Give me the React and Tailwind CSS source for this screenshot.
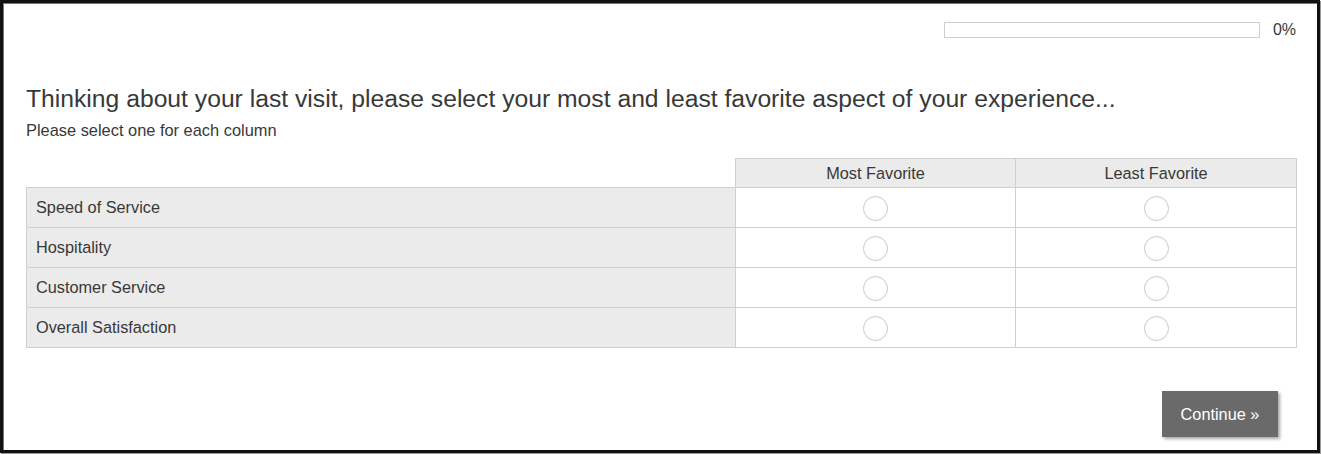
import React from "react";

const rows = ["Speed of Service", "Hospitality", "Customer Service", "Overall Satisfaction"];

function Radio() {
  return <span className="inline-block w-[25px] h-[25px] rounded-full border border-[#c8c8c8] bg-white align-middle" />;
}

export default function App() {
  return (
    <div className="w-[1321px] h-[454px] bg-white font-['Liberation_Sans',Arial,sans-serif] text-[#383838]">
      <div className="w-[1320px] h-[453px] border-[3px] border-[#111] shadow-[1px_1px_0_#999,inset_1px_1px_0_#777] flex flex-col pl-[23px] pr-[20px] pt-[17px]">
        {/* progress */}
        <div className="flex items-center justify-end gap-[13px]">
          <div className="w-[316px] h-[16px] border border-[#cfcfcf] bg-white" />
          <span className="text-[16px] leading-[20px] mr-[1px]">0%</span>
        </div>

        <h1 className="mt-[45px] text-[24.7px] leading-[28px] font-normal">
          Thinking about your last visit, please select your most and least favorite aspect of your experience...
        </h1>
        <p className="mt-[7px] text-[16.4px] leading-[20px]">Please select one for each column</p>

        <table className="mt-[18px] w-[1270px] table-fixed border-collapse text-[16.3px]">
          <colgroup>
            <col className="w-[709px]" />
            <col className="w-[280px]" />
            <col className="w-[281px]" />
          </colgroup>
          <thead>
            <tr className="h-[29px]">
              <th className="p-0" />
              <th className="border border-[#d0d0d0] bg-[#ebebeb] font-normal p-0">Most Favorite</th>
              <th className="border border-[#d0d0d0] bg-[#ebebeb] font-normal p-0">Least Favorite</th>
            </tr>
          </thead>
          <tbody>
            {rows.map((r) => (
              <tr key={r} className="h-[40px]">
                <td className="border border-[#d0d0d0] bg-[#ebebeb] pl-[9px] py-0">{r}</td>
                <td className="border border-[#d0d0d0] text-center p-0">
                  <Radio />
                </td>
                <td className="border border-[#d0d0d0] text-center p-0">
                  <Radio />
                </td>
              </tr>
            ))}
          </tbody>
        </table>

        <div className="mt-[43px] flex justify-end pr-[19px]">
          <button className="w-[116px] h-[46px] bg-[#6a6a6a] text-white text-[16.3px] shadow-[2px_2px_3px_rgba(0,0,0,0.35)]">
            Continue »
          </button>
        </div>
      </div>
    </div>
  );
}
